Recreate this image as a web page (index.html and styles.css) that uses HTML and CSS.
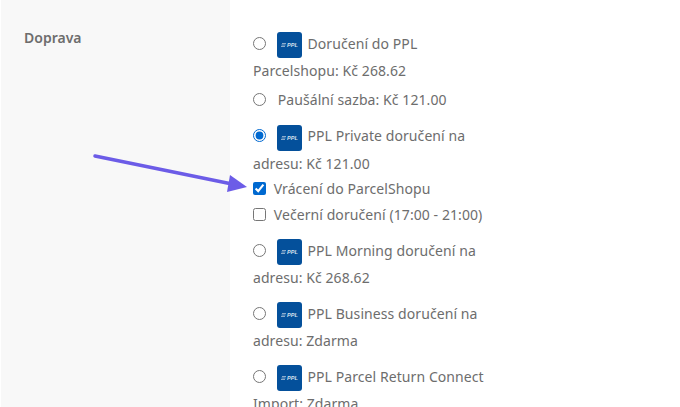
FILE: index.html
```html
<!DOCTYPE html>
<html lang="cs">
  <head>
    <meta charset="UTF-8" />
    <title>Doprava</title>
    <link rel="stylesheet" href="styles.css">
  </head>
  <body>
    <div class="shipping-row">
      <div class="shipping-label">Doprava</div>
      <div class="shipping-value">
        <ul class="methods">
          <li class="first">
            <input type="radio" name="ship" />
            <svg class="logo" viewBox="0 0 26 26"><rect width="25" height="26" rx="3" fill="#04509b"/><path class="logo-lines" d="M5 11.5h4M4.5 13h4M4 14.5h4"/><text x="10" y="15" class="logo-text" textLength="11" lengthAdjust="spacingAndGlyphs">PPL</text></svg>
            Doručení do PPL Parcelshopu: Kč 268.62
          </li>
          <li class="no-logo">
            <input type="radio" name="ship" />
            <span class="flat">Paušální sazba: Kč 121.00</span>
          </li>
          <li class="has-extras">
            <input type="radio" name="ship" checked />
            <svg class="logo" viewBox="0 0 26 26"><rect width="25" height="26" rx="3" fill="#04509b"/><path class="logo-lines" d="M5 11.5h4M4.5 13h4M4 14.5h4"/><text x="10" y="15" class="logo-text" textLength="11" lengthAdjust="spacingAndGlyphs">PPL</text></svg>
            PPL Private doručení na adresu: Kč 121.00
            <label class="extra"><input type="checkbox" checked /> Vrácení do ParcelShopu</label>
            <label class="extra"><input type="checkbox" /> Večerní doručení (17:00 - 21:00)</label>
          </li>
          <li>
            <input type="radio" name="ship" />
            <svg class="logo" viewBox="0 0 26 26"><rect width="25" height="26" rx="3" fill="#04509b"/><path class="logo-lines" d="M5 11.5h4M4.5 13h4M4 14.5h4"/><text x="10" y="15" class="logo-text" textLength="11" lengthAdjust="spacingAndGlyphs">PPL</text></svg>
            PPL Morning doručení na adresu: Kč 268.62
          </li>
          <li>
            <input type="radio" name="ship" />
            <svg class="logo" viewBox="0 0 26 26"><rect width="25" height="26" rx="3" fill="#04509b"/><path class="logo-lines" d="M5 11.5h4M4.5 13h4M4 14.5h4"/><text x="10" y="15" class="logo-text" textLength="11" lengthAdjust="spacingAndGlyphs">PPL</text></svg>
            PPL Business doručení na adresu: Zdarma
          </li>
          <li>
            <input type="radio" name="ship" />
            <svg class="logo" viewBox="0 0 26 26"><rect width="25" height="26" rx="3" fill="#04509b"/><path class="logo-lines" d="M5 11.5h4M4.5 13h4M4 14.5h4"/><text x="10" y="15" class="logo-text" textLength="11" lengthAdjust="spacingAndGlyphs">PPL</text></svg>
            PPL Parcel Return Connect Import: Zdarma
          </li>
        </ul>
      </div>
    </div>
    <svg class="arrow" viewBox="0 0 680 407">
      <line x1="95" y1="156" x2="232" y2="184" stroke="#6c5ce7" stroke-width="3.5" stroke-linecap="round"/>
      <polygon points="247,187 230,175 227,192" fill="#6c5ce7"/>
    </svg>
  </body>
</html>
```

FILE: styles.css
```css
html, body {
  height: 100%;
}

body {
  margin: 0;
  padding-left: 1px;
  background-color: #fff;
  font-family: "Noto Sans", sans-serif;
  font-size: 14px;
  color: #6d6d6d;
  overflow: hidden;
  position: relative;
}

.shipping-row {
  display: flex;
  min-height: 100%;
}

.shipping-label {
  width: 206px;
  padding: 29px 0 0 23px;
  background-color: #f8f8f8;
  font-size: 14px;
  font-weight: 600;
  color: #6d6d6d;
  line-height: 18px;
}

.shipping-value {
  padding: 31px 0 0 23px;
}

.methods {
  list-style: none;
  margin: 0;
  padding: 0;
  width: 240px;
  line-height: 26px;
  letter-spacing: 0.08px;
}

.methods li {
  margin-bottom: 10px;
}

.methods li.first {
  margin-bottom: 3px;
}

.methods input {
  margin: 0 6px 0 0;
  vertical-align: -1px;
  accent-color: #0069d0;
}

.logo {
  width: 26px;
  height: 26px;
  margin: 0 1px 0 1px;
  vertical-align: middle;
}

.logo-lines {
  stroke: #c3d2e3;
  stroke-width: 0.7;
  fill: none;
}

.logo-text {
  fill: #d8e2ee;
  font-family: "Liberation Sans", sans-serif;
  font-size: 6px;
  font-weight: 700;
  font-style: italic;
}

.flat {
  margin-left: 2px;
}

.extra {
  display: block;
  margin-top: -1px;
}

.extra + .extra {
  margin-top: 0;
}

.extra input {
  margin-right: 4px;
  vertical-align: -1px;
}

.arrow {
  position: absolute;
  top: 0;
  left: 0;
  width: 680px;
  height: 407px;
  pointer-events: none;
}
```
